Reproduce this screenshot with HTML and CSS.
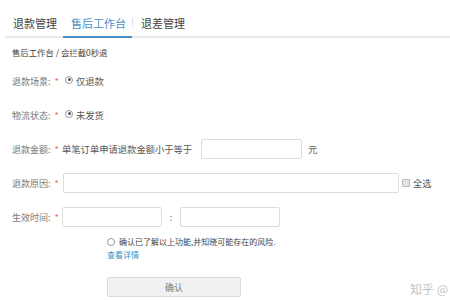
FILE: index.html
```
<html>
	<head>
		<meta charset="utf-8" />
		<title>售后工作台</title>
		<link rel="stylesheet" href="styles.css">
	</head>
	<body>
		<div class="tabs">
			<div class="tab">退款管理</div>
			<div class="tab active">售后工作台</div>
			<span class="sep"></span>
			<div class="tab">退差管理</div>
		</div>

		<div class="crumb">售后工作台 / 会拦截0秒退</div>

		<div class="form">
			<div class="row">
				<span class="label">退款场景:<i>*</i></span>
				<span class="radio on"></span>
				<span class="val">仅退款</span>
			</div>

			<div class="row">
				<span class="label">物流状态:<i>*</i></span>
				<span class="radio on"></span>
				<span class="val">未发货</span>
			</div>

			<div class="row">
				<span class="label">退款金额:<i>*</i></span>
				<span class="val">单笔订单申请退款金额小于等于</span>
				<input class="ipt ipt-amount" type="text">
				<span class="unit">元</span>
			</div>

			<div class="row">
				<span class="label">退款原因:<i>*</i></span>
				<input class="ipt ipt-reason" type="text">
				<span class="check"></span>
				<span class="val">全选</span>
			</div>

			<div class="row">
				<span class="label">生效时间:<i>*</i></span>
				<input class="ipt ipt-time" type="text">
				<span class="colon">:</span>
				<input class="ipt ipt-time" type="text">
			</div>

			<div class="confirm">
				<div class="agree">
					<span class="radio"></span>
					<span>确认已了解以上功能,并知晓可能存在的风险.</span>
				</div>
				<a class="more">查看详情</a>
				<div class="btn">确认</div>
			</div>
		</div>

		<div class="mark">知乎 @</div>
	</body>
</html>
```

FILE: styles.css
```
body{
	margin: 0;
	font-family: "Noto Sans CJK SC", "Liberation Sans", sans-serif;
	color: #555;
	background: #fff;
	position: relative;
	width: 450px;
	height: 300px;
	overflow: hidden;
}
.tabs{
	display: flex;
	align-items: center;
	margin: 9px 0 0 5px;
	border-bottom: 2px solid #e8e8e8;
}
.tab{
	font-size: 11px;
	line-height: 16px;
	padding: 6px 6px 5px 8px;
	color: #444;
	border-bottom: 2px solid transparent;
	margin-bottom: -2px;
}
.tab.active{
	color: #4a8ec6;
	border-bottom-color: #4a8ec6;
}
.sep{
	width: 1px;
	height: 9px;
	background: #e2e2e2;
}
.crumb{
	font-size: 8.4px;
	line-height: 12px;
	margin: 8px 0 0 12px;
	color: #444;
}
.form{
	padding-left: 12px;
	margin-top: 13px;
}
.row{
	display: flex;
	align-items: center;
	height: 20px;
	margin-bottom: 14px;
	font-size: 9px;
}
.label{
	width: 50px;
	color: #777;
	white-space: nowrap;
}
.label i{
	font-style: normal;
	color: #e8684a;
	margin-left: 4px;
}
.val{
	color: #555;
	font-size: 9.3px;
}
.radio{
	width: 6px;
	height: 6px;
	border: 1px solid #999;
	border-radius: 50%;
	margin: -3px 3px 0 3px;
	position: relative;
}
.radio.on:after{
	content: "";
	position: absolute;
	left: 1.5px;
	top: 1.5px;
	width: 3px;
	height: 3px;
	border-radius: 50%;
	background: #555;
}
.ipt{
	box-sizing: border-box;
	height: 20px;
	border: 1px solid #dcdcdc;
	border-radius: 2px;
	padding: 0;
	margin: 0;
	background: #fff;
}
.ipt-amount{
	width: 101px;
	margin-left: 9px;
}
.unit{
	margin-left: 6px;
}
.ipt-reason{
	width: 336px;
	margin-left: 1px;
}
.check{
	width: 6px;
	height: 6px;
	border: 1px solid #bbb;
	border-radius: 1px;
	background: #e4e4e4;
	margin: 0 3px 0 3px;
}
.ipt-time{
	width: 100px;
}
.colon{
	width: 18px;
	text-align: center;
	color: #777;
}
.confirm{
	margin-left: 95px;
	margin-top: -4px;
	font-size: 8px;
	color: #444;
}
.agree{
	display: flex;
	align-items: center;
	line-height: 10px;
}
.agree .radio{
	margin: 0 4px 0 0;
}
.more{
	display: block;
	color: #3a8fc4;
	line-height: 10px;
	margin-top: 3px;
}
.btn{
	width: 134px;
	height: 20px;
	line-height: 20px;
	margin-top: 17px;
	text-align: center;
	font-size: 9px;
	color: #777;
	background: #f1f1f1;
	border: 1px solid #dadada;
	border-radius: 2px;
	box-sizing: border-box;
}
.mark{
	position: absolute;
	left: 410px;
	top: 280px;
	font-size: 12px;
	color: #c4c4c4;
	white-space: nowrap;
}
```
